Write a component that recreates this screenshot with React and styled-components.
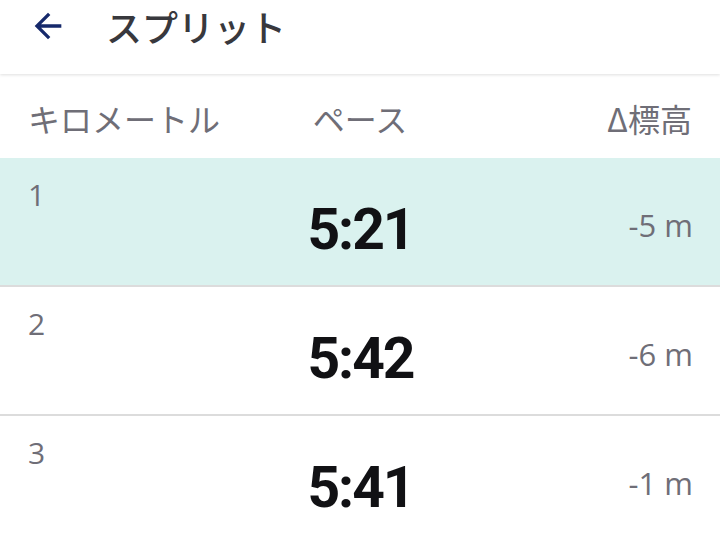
import React from "react";
import styled, { createGlobalStyle } from "styled-components";

const Global = createGlobalStyle`
  html, body { margin: 0; padding: 0; background: #fff; }
  body { font-family: "Open Sans", "Noto Sans CJK JP", sans-serif; }
`;

const Page = styled.div`
  width: 720px;
  height: 539px;
  overflow: hidden;
  background: #fff;
  display: flex;
  flex-direction: column;
`;

const Header = styled.header`
  height: 74px;
  flex: none;
  display: flex;
  align-items: center;
  padding-left: 28px;
  gap: 38px;
  background: #fff;
  box-shadow: 0 1px 3px rgba(0, 0, 0, 0.13);
  position: relative;
  z-index: 1;
  box-sizing: border-box;
  padding-bottom: 22px;
`;

const BackButton = styled.button`
  border: 0;
  background: none;
  padding: 0;
  width: 40px;
  height: 40px;
  display: flex;
  color: #16296b;
`;

const Title = styled.h1`
  margin: 0;
  font-family: "Noto Sans CJK JP", sans-serif;
  font-weight: 500;
  font-size: 36px;
  line-height: 36px;
  color: #38383d;
`;

const ColumnHeads = styled.div`
  height: 84px;
  flex: none;
  display: grid;
  grid-template-columns: 1fr auto 1fr;
  align-items: center;
  padding: 0 28px;
  box-sizing: border-box;
`;

const Head = styled.div`
  font-family: "Noto Sans CJK JP", sans-serif;
  font-size: 32px;
  line-height: 32px;
  color: #6f6e77;
  text-align: ${(p) => p.$align || "left"};
  padding-top: 4px;
`;

const Row = styled.div`
  height: 127px;
  flex: none;
  display: grid;
  grid-template-columns: 1fr auto 1fr;
  align-items: start;
  padding: 0 27px 0 28px;
  background: ${(p) => (p.$active ? "#daf2ef" : "#fff")};
  border-bottom: 2px solid #dcdcdc;
`;

const Km = styled.div`
  font-family: "Open Sans", sans-serif;
  font-size: 30px;
  line-height: 30px;
  color: #6f6e77;
  padding-top: 22px;
`;

const Pace = styled.div`
  font-family: Roboto, sans-serif;
  font-weight: 700;
  font-size: 57px;
  line-height: 57px;
  letter-spacing: -2px;
  color: #111114;
  padding-top: 43px;
`;

const Delta = styled.div`
  font-family: "Open Sans", sans-serif;
  font-size: 31px;
  line-height: 31px;
  color: #6f6e77;
  text-align: right;
  padding-top: 52px;
`;

const splits = [
  { km: "1", pace: "5:21", delta: "-5 m", active: true },
  { km: "2", pace: "5:42", delta: "-6 m" },
  { km: "3", pace: "5:41", delta: "-1 m" },
];

export default function App() {
  return (
    <Page>
      <Global />
      <Header>
        <BackButton aria-label="戻る">
          <svg width="40" height="40" viewBox="0 0 24 24" fill="currentColor">
            <path d="M20 11H7.83l5.59-5.59L12 4l-8 8 8 8 1.41-1.41L7.83 13H20v-2z" />
          </svg>
        </BackButton>
        <Title>スプリット</Title>
      </Header>
      <ColumnHeads>
        <Head>キロメートル</Head>
        <Head $align="center">ペース</Head>
        <Head $align="right">Δ標高</Head>
      </ColumnHeads>
      {splits.map((s) => (
        <Row key={s.km} $active={s.active}>
          <Km>{s.km}</Km>
          <Pace>{s.pace}</Pace>
          <Delta>{s.delta}</Delta>
        </Row>
      ))}
    </Page>
  );
}
